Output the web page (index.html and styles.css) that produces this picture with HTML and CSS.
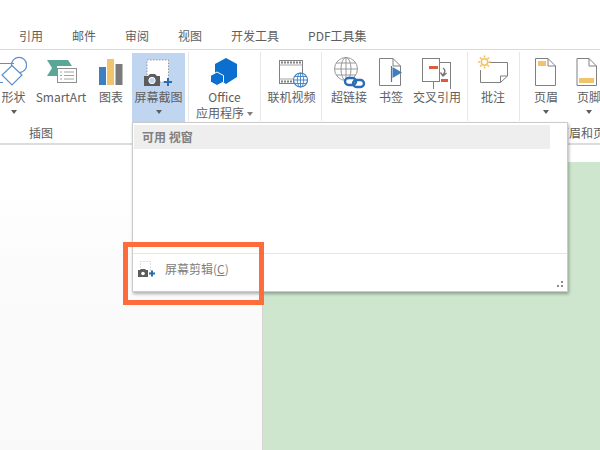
FILE: index.html
```html
<!DOCTYPE html>
<html lang="zh-CN">
<head>
<meta charset="utf-8">
<title>屏幕截图</title>
<link rel="stylesheet" href="styles.css">
</head>
<body>
<div class="app">
  <nav class="tabs">
    <span>引用</span><span>邮件</span><span>审阅</span><span>视图</span><span>开发工具</span><span>PDF工具集</span>
  </nav>

  <section class="ribbon">
    <div class="group g-illustrations">
      <div class="tools">
        <div class="tool w27">
          <svg class="icon" width="27" height="36" viewBox="0 53 27 36" fill="none" stroke="#5b90cb" stroke-width="1.200">
            <path d="M0 63.500H14M0 82.500H3"/>
            <circle cx="19" cy="65" r="7.600"/>
            <path d="M12 65.500L22 75L12 85L2 75Z" fill="#fff"/>
          </svg>
          <span class="label">形状</span>
          <i class="arrow"></i>
        </div>
        <div class="tool w68">
          <svg class="icon" width="68" height="36" viewBox="27 53 68 36">
            <path d="M47 60H68L72 66H57V76H47L52 68Z" fill="#5aa798"/>
            <rect x="57.500" y="68.500" width="19" height="14" fill="#fff" stroke="#8f8f8f"/>
            <path d="M60 72H62M64 72H74M60 75.500H62M64 75.500H74M60 79H62M64 79H74" stroke="#a3a3a3"/>
          </svg>
          <span class="label">SmartArt</span>
        </div>
        <div class="tool w32">
          <svg class="icon" width="32" height="36" viewBox="95 53 32 36">
            <rect x="99" y="67" width="7" height="18" fill="#3f7fc1"/>
            <rect x="107" y="59" width="7" height="26" fill="#f0c36d"/>
            <rect x="115.500" y="64" width="7" height="21" fill="#7a7a7a"/>
          </svg>
          <span class="label">图表</span>
        </div>
        <div class="tool w53 tool-active">
          <svg class="icon" width="53" height="36" viewBox="132 53 53 36">
            <rect x="147" y="60" width="21.500" height="22" fill="#fff" stroke="#9a9a9a" stroke-dasharray="1.500 1.500"/>
            <path d="M144 76H148L150 74H155L157 76H160V86H144Z" fill="#5c5c5c"/>
            <circle cx="152" cy="80.500" r="3.200" fill="#c0d5f0" stroke="#fff"/>
            <path d="M168 78V86M164 82H172" stroke="#2a6db5" stroke-width="2"/>
          </svg>
          <span class="label">屏幕截图</span>
          <i class="arrow"></i>
        </div>
      </div>
      <div class="group-label group-label-start">插图</div>
    </div>

    <div class="group g-apps">
      <div class="tools">
        <div class="tool w71">
          <svg class="icon" width="71" height="36" viewBox="189 53 71 36">
            <path d="M226 58L237 64V77L226 84L215 77V64Z" fill="#0b6fcf"/>
            <path d="M217 72L223.500 75.500V82L217 85.500L210.500 82V75.500Z" fill="#0b6fcf" stroke="#fff" stroke-width="1"/>
          </svg>
          <span class="label">Office</span>
          <span class="label">应用程序<i class="arrow arrow-inline"></i></span>
        </div>
      </div>
      <div class="group-label"></div>
    </div>

    <div class="group g-media">
      <div class="tools">
        <div class="tool w61">
          <svg class="icon" width="61" height="36" viewBox="261 53 61 36">
            <rect x="279.500" y="60.500" width="23" height="23" fill="#fff" stroke="#808080"/>
            <path d="M281 62.500H301M281 81.500H297" stroke="#808080" stroke-width="2" stroke-dasharray="2 1"/>
            <path d="M279.500 65H302.500M279.500 79H293" stroke="#a3a3a3"/>
            <circle cx="300.500" cy="80" r="7" fill="#fff" stroke="#3f7fc1" stroke-width="1.200"/>
            <path d="M293.500 80H307.500M300.500 73V87M295 76.500H306M295 83.500H306" stroke="#3f7fc1" stroke-width=".9"/>
            <ellipse cx="300.500" cy="80" rx="3.200" ry="7" fill="none" stroke="#3f7fc1" stroke-width=".9"/>
          </svg>
          <span class="label">联机视频</span>
        </div>
      </div>
      <div class="group-label"></div>
    </div>

    <div class="group g-links">
      <div class="tools">
        <div class="tool w54">
          <svg class="icon" width="54" height="36" viewBox="322 53 54 36">
            <g fill="none" stroke="#999" stroke-width="1">
              <circle cx="346" cy="69" r="11.500"/>
              <ellipse cx="346" cy="69" rx="5" ry="11.500"/>
              <path d="M334.500 69H357.500M336 63H356M336 75H356M346 57.500V80.500"/>
            </g>
            <g fill="none" stroke="#2a6db5" stroke-width="2.400">
              <rect x="345" y="78" width="11" height="7" rx="3.500" fill="#fff"/>
              <rect x="353" y="80" width="11" height="7" rx="3.500"/>
            </g>
          </svg>
          <span class="label">超链接</span>
        </div>
        <div class="tool w30">
          <svg class="icon" width="30" height="36" viewBox="376 53 30 36">
            <path d="M379.500 58.500H393L400.500 66V85.500H379.500Z" fill="#fff" stroke="#808080"/>
            <path d="M393 58.500V66H400.500" fill="none" stroke="#808080"/>
            <path d="M391.500 66V82" stroke="#707070" stroke-width="1.200"/>
            <path d="M392.500 67L402 72.500L392.500 78Z" fill="#3f7fc1"/>
          </svg>
          <span class="label">书签</span>
        </div>
        <div class="tool w62">
          <svg class="icon" width="62" height="36" viewBox="406 53 62 36">
            <rect x="433.500" y="62.500" width="17" height="27" fill="#fff" stroke="#808080"/>
            <rect x="422.500" y="58.500" width="17" height="23" fill="#fff" stroke="#808080"/>
            <rect x="429" y="66" width="9" height="3" fill="#dc5b3b"/>
            <rect x="441" y="79" width="7" height="3" fill="#dc5b3b"/>
            <path d="M443 68C446 70 445 72 443 75M440.500 72.500L443 76L446.500 73" fill="none" stroke="#707070" stroke-width="1.300"/>
          </svg>
          <span class="label">交叉引用</span>
        </div>
      </div>
      <div class="group-label"></div>
    </div>

    <div class="group g-comments">
      <div class="tools">
        <div class="tool w50">
          <svg class="icon" width="50" height="36" viewBox="468 53 50 36">
            <path d="M488.500 62.500H507.500V76L500.500 82.500H480.500V70" fill="#fff" stroke="#808080"/>
            <path d="M500.500 82.500V76H507.500" fill="none" stroke="#808080"/>
            <circle cx="484.500" cy="62" r="3.200" fill="#fff" stroke="#f2c25f" stroke-width="1.500"/>
            <path d="M484.500 55.500V57.500M484.500 66.500V68.500M478 62H480M489 62H491M480 57.500L481.500 59M487.500 65L489 66.500M480 66.500L481.500 65M487.500 59L489 57.500" stroke="#f2c25f" stroke-width="1.600"/>
          </svg>
          <span class="label">批注</span>
        </div>
      </div>
      <div class="group-label"></div>
    </div>

    <div class="group g-header">
      <div class="tools">
        <div class="tool w52">
          <svg class="icon" width="52" height="36" viewBox="520 53 52 36">
            <path d="M535.500 58.500H548L555.500 66V85.500H535.500Z" fill="#fff" stroke="#808080"/>
            <path d="M548 58.500V66H555.500" fill="none" stroke="#808080"/>
            <rect x="538" y="61" width="8" height="5" fill="#f0c36d"/>
          </svg>
          <span class="label">页眉</span>
          <i class="arrow"></i>
        </div>
        <div class="tool w34">
          <svg class="icon" width="34" height="36" viewBox="572 53 34 36">
            <path d="M577 58.500H589L596.500 66V85.500H577Z" fill="#fff" stroke="#808080"/>
            <path d="M589 58.500V66H596.500" fill="none" stroke="#808080"/>
            <rect x="579" y="78" width="15" height="5" fill="#f0c36d"/>
          </svg>
          <span class="label">页脚</span>
          <i class="arrow"></i>
        </div>
      </div>
      <div class="group-label">页眉和页脚</div>
    </div>
  </section>

  <main class="doc">
    <div class="doc-side"></div>
    <div class="doc-page"></div>
  </main>

  <aside class="popup">
    <div class="popup-head">可用 视窗</div>
    <div class="popup-body"></div>
    <div class="popup-foot">
      <div class="clip-item">
        <svg width="17" height="17" viewBox="138 260 17 17">
          <rect x="140.500" y="260.500" width="10" height="11" fill="#fff" stroke="#bbb" stroke-dasharray="1 2"/>
          <path d="M138 269H140L141 268H145L146 269H148V276H138Z" fill="#5c5c5c"/>
          <circle cx="143" cy="272.500" r="1.800" fill="#fff"/>
          <path d="M152 269.500V275.500M149 272.500H155" stroke="#2a6db5" stroke-width="2"/>
        </svg>
        <span>屏幕剪辑(<u>C</u>)</span>
      </div>
      <svg class="grip" width="8" height="7" viewBox="0 0 8 7" fill="#8c8c8c">
        <rect x="5" y="0" width="2" height="2"/>
        <rect x="1" y="4" width="2" height="2"/>
        <rect x="5" y="4" width="2" height="2"/>
      </svg>
    </div>
  </aside>

  <div class="callout"></div>
</div>
</body>
</html>
```
FILE: styles.css
```css
* { box-sizing: border-box; }

html, body {
  margin: 0;
  height: 100%;
  background: #fff;
}

.app {
  position: relative;
  display: flex;
  flex-direction: column;
  width: 600px;
  height: 450px;
  overflow: hidden;
  font: 12px/16px "Noto Sans CJK SC", "Noto Sans", sans-serif;
  color: #5e5e5e;
}

.tabs {
  display: flex;
  flex: none;
  gap: 29px;
  height: 50px;
  padding: 28px 0 0 19px;
  border-bottom: 1px solid #dadada;
  white-space: nowrap;
}

.ribbon {
  display: flex;
  flex: none;
  height: 95px;
  border-bottom: 2px solid #dcdcdc;
}

.group {
  display: flex;
  flex: none;
  flex-direction: column;
  position: relative;
}

.group::after {
  content: "";
  position: absolute;
  top: 2px;
  right: 0;
  bottom: 22px;
  width: 1px;
  background: #e8e8e8;
}

.g-illustrations { width: 189px; }
.g-apps { width: 72px; }
.g-media { width: 61px; }
.g-links { width: 146px; }
.g-comments { width: 52px; }
.g-header { width: 134px; }
.g-header::after { display: none; }

.tools {
  display: flex;
  flex: none;
  height: 72px;
  padding-top: 3px;
}

.tool {
  display: flex;
  flex: none;
  flex-direction: column;
  align-items: center;
  height: 69px;
}

.w27 { width: 27px; }
.w30 { width: 30px; }
.w32 { width: 32px; }
.w34 { width: 34px; }
.w50 { width: 50px; }
.w52 { width: 52px; }
.w53 { width: 53px; }
.w54 { width: 54px; }
.w61 { width: 61px; }
.w62 { width: 62px; }
.w68 { width: 68px; }
.w71 { width: 71px; }

.tool-active {
  margin-left: 5px;
  background: #c0d5f0;
}

.icon {
  display: block;
  flex: none;
}

.label {
  white-space: nowrap;
}

.arrow {
  display: block;
  width: 0;
  height: 0;
  margin-top: 5px;
  border-style: solid;
  border-width: 4px 3.500px 0;
  border-color: #5e5e5e transparent transparent;
}

.arrow-inline {
  display: inline-block;
  margin: 0 0 2px 3px;
  border-color: #808080 transparent transparent;
}

.group-label {
  flex: 1;
  text-align: center;
  line-height: 22px;
  white-space: nowrap;
}

.group-label-start {
  padding-left: 29px;
  text-align: left;
}

.doc {
  display: flex;
  flex: 1;
  min-height: 0;
}

.doc-side {
  flex: none;
  width: 263px;
  border-right: 1px solid #d9d4d4;
  background: linear-gradient(#fff 0, #fff 40px, #fbfbfb 120px, #f9f9f9 100%);
}

.doc-page {
  flex: 1;
  margin-top: 17px;
  background: #cde6cd;
}

.popup {
  position: absolute;
  top: 122px;
  left: 132px;
  display: flex;
  flex-direction: column;
  width: 436px;
  height: 170px;
  padding: 2px 1px 1px;
  border: 1px solid #cccccc;
  background: #fff;
  box-shadow: 1px 2px 3px rgba(0, 0, 0, .3);
}

.popup-head {
  flex: none;
  height: 24px;
  margin-right: 16px;
  padding-left: 8px;
  background: #eeeeee;
  font-weight: 700;
  line-height: 24px;
  color: #808080;
}

.popup-body {
  flex: 1;
}

.popup-foot {
  display: flex;
  flex: none;
  justify-content: space-between;
  height: 38px;
  margin: 0 -1px -1px;
  padding: 7px 3px 3px 5px;
  border-top: 1px solid #e6e6e6;
}

.clip-item {
  display: flex;
  align-items: flex-start;
  gap: 10px;
  color: #808080;
}

.clip-item svg {
  display: block;
  flex: none;
}

.grip {
  align-self: flex-end;
}

.callout {
  position: absolute;
  top: 242px;
  left: 123px;
  width: 141px;
  height: 63px;
  border: 5px solid #ff6c3b;
}
```
